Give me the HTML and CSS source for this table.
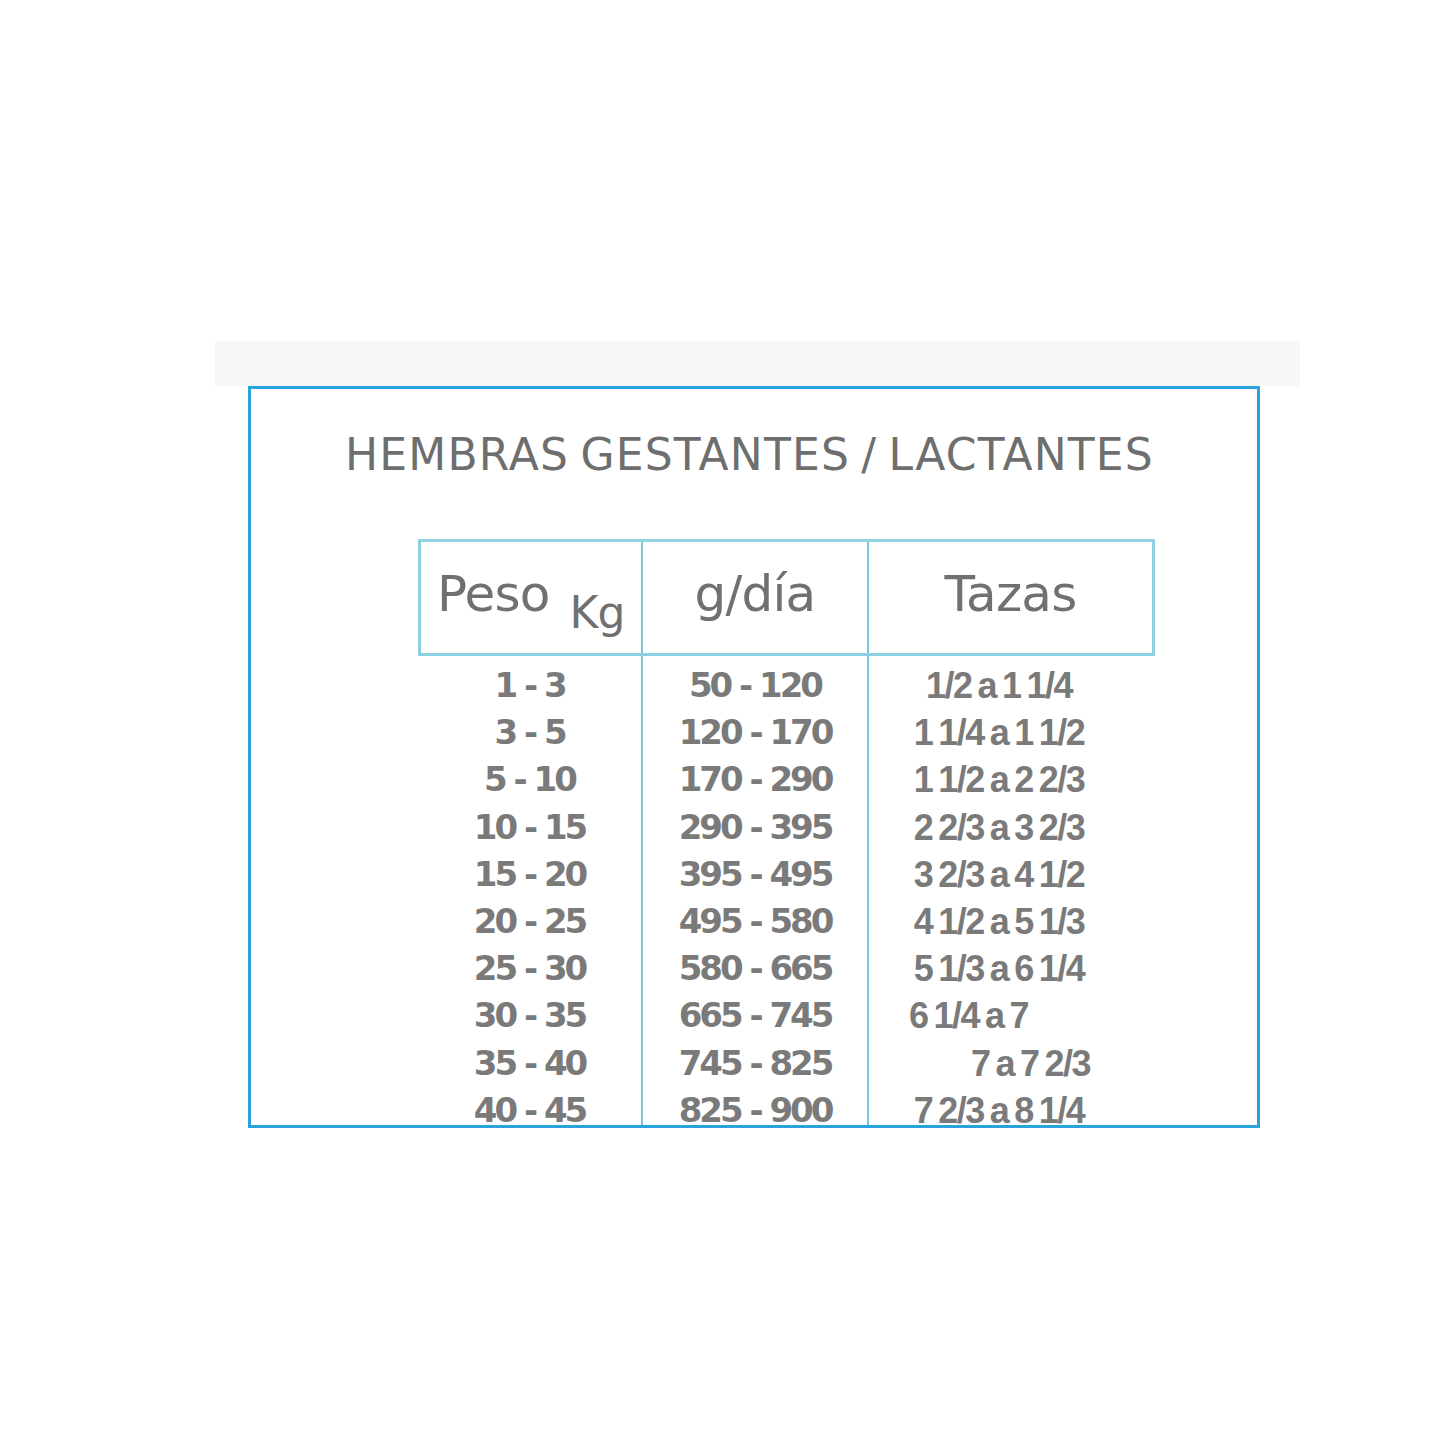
FILE: index.html
```html
<!DOCTYPE html>
<html lang="es">
<head>
<meta charset="utf-8">
<title>Hembras gestantes / lactantes</title>
<link rel="stylesheet" href="styles.css">
</head>
<body>
<div class="page">
  <div class="strip"></div>
  <div class="frame">
    <h1 class="title">HEMBRAS GESTANTES / LACTANTES</h1>
    <div class="table">
      <div class="head">
        <div class="hcell hcell-peso">Peso <span class="unit">Kg</span></div>
        <div class="hcell">g/día</div>
        <div class="hcell">Tazas</div>
      </div>
      <div class="body">
        <div class="col">
          <div class="row">1 - 3</div>
          <div class="row">3 - 5</div>
          <div class="row">5 - 10</div>
          <div class="row">10 - 15</div>
          <div class="row">15 - 20</div>
          <div class="row">20 - 25</div>
          <div class="row">25 - 30</div>
          <div class="row">30 - 35</div>
          <div class="row">35 - 40</div>
          <div class="row">40 - 45</div>
        </div>
        <div class="col">
          <div class="row">50 - 120</div>
          <div class="row">120 - 170</div>
          <div class="row">170 - 290</div>
          <div class="row">290 - 395</div>
          <div class="row">395 - 495</div>
          <div class="row">495 - 580</div>
          <div class="row">580 - 665</div>
          <div class="row">665 - 745</div>
          <div class="row">745 - 825</div>
          <div class="row">825 - 900</div>
        </div>
        <div class="col col-tazas">
          <div class="row">1/2 a 1 1/4</div>
          <div class="row">1 1/4 a 1 1/2</div>
          <div class="row">1 1/2 a 2 2/3</div>
          <div class="row">2 2/3 a 3 2/3</div>
          <div class="row">3 2/3 a 4 1/2</div>
          <div class="row">4 1/2 a 5 1/3</div>
          <div class="row">5 1/3 a 6 1/4</div>
          <div class="row row-left">6 1/4 a 7</div>
          <div class="row row-right">7 a 7 2/3</div>
          <div class="row">7 2/3 a 8 1/4</div>
        </div>
      </div>
    </div>
  </div>
</div>
</body>
</html>
```

FILE: styles.css
```css
html, body {
  margin: 0;
  padding: 0;
  background: #ffffff;
}

.page {
  width: 1445px;
  height: 1445px;
  padding-top: 341px;
  box-sizing: border-box;
  font-family: "DejaVu Sans", "Noto Sans", sans-serif;
  color: #747474;
}

.strip {
  margin-left: 215px;
  width: 1085px;
  height: 45px;
  background: #f7f7f7;
}

.frame {
  margin-left: 248px;
  width: 1012px;
  height: 742px;
  box-sizing: border-box;
  border: 3px solid #2aa3dc;
  overflow: hidden;
  background: #ffffff;
}

.title {
  margin: 0;
  padding-top: 40px;
  padding-left: 94px;
  height: 150px;
  box-sizing: border-box;
  font-size: 44px;
  font-weight: 500;
  letter-spacing: 1.2px;
  word-spacing: -4px;
  line-height: 52px;
  color: #6e6e6e;
  white-space: nowrap;
}

.table {
  margin-left: 167px;
  width: 737px;
}

.head {
  display: grid;
  grid-template-columns: 220px 226px 1fr;
  height: 117px;
  box-sizing: border-box;
  border: 3px solid #8ccfe3;
  border-top-color: #92d2e4;
}

.hcell {
  display: flex;
  align-items: center;
  justify-content: center;
  padding-bottom: 8px;
  font-size: 50px;
  font-weight: 500;
  letter-spacing: -0.8px;
  color: #707070;
  border-left: 2px solid #7cc7de;
}

.hcell:first-child {
  border-left: none;
}

.hcell-peso {
  justify-content: flex-start;
  padding-left: 16px;
}

.unit {
  font-size: 44px;
  margin-left: 20px;
  position: relative;
  top: 19px;
  letter-spacing: -1px;
}

.body {
  display: grid;
  grid-template-columns: 223px 226px 1fr;
}

.col {
  padding-top: 6px;
  border-left: 2px solid #7cc7de;
  text-align: center;
}

.col:first-child {
  border-left: none;
}

.row {
  height: 47.2px;
  line-height: 47px;
  font-size: 34px;
  font-weight: bold;
  letter-spacing: -3px;
  word-spacing: 0;
  color: #7a7a7a;
  white-space: nowrap;
}

.col-tazas .row {
  font-family: "Liberation Sans", "Arial", sans-serif;
  font-size: 36px;
  padding-right: 26px;
  letter-spacing: -1.5px;
  word-spacing: -2.5px;
}

.col-tazas .row-left {
  text-align: left;
  padding-left: 40px;
  padding-right: 0;
}

.col-tazas .row-right {
  text-align: right;
  padding-right: 65px;
}
```
